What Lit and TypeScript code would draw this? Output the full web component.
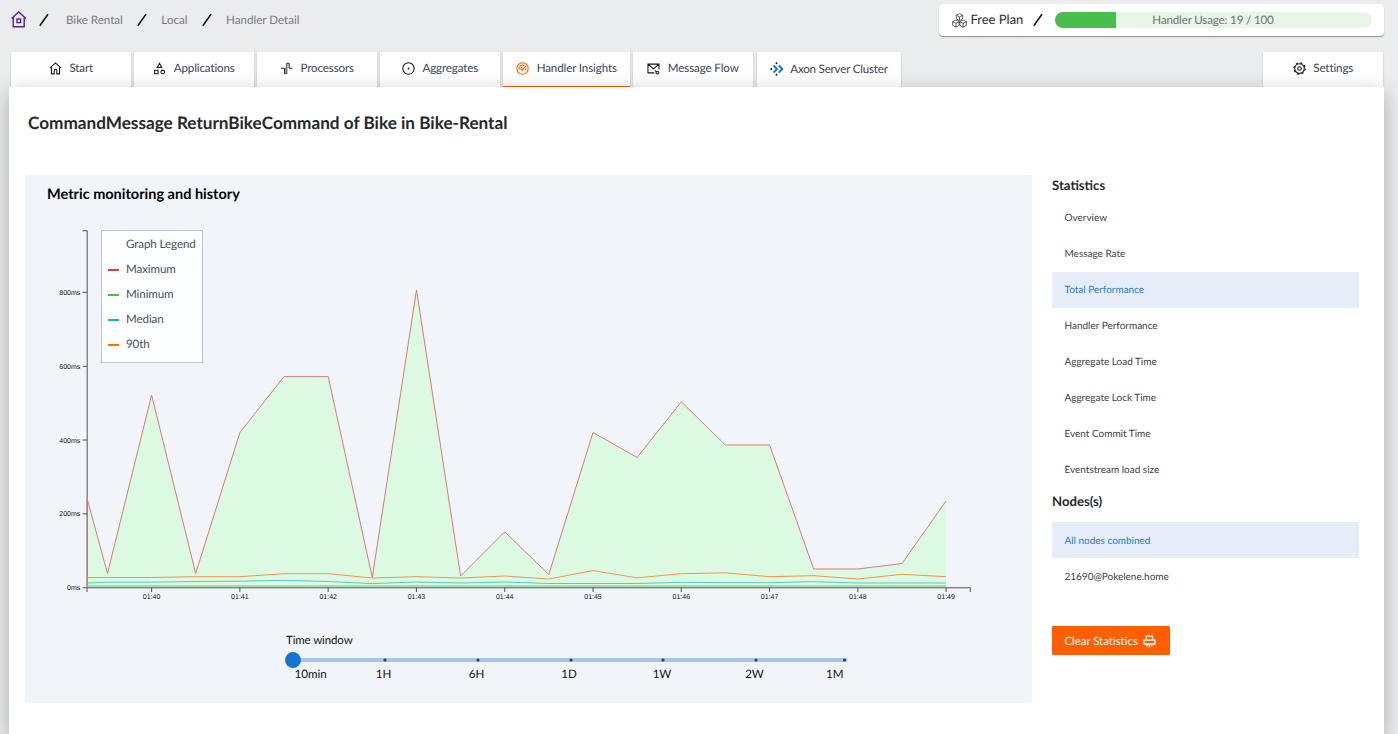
import { LitElement, html, svg, css } from "lit";
import { customElement } from "lit/decorators.js";
import { classMap } from "lit/directives/class-map.js";

const icons: Record<string, unknown> = {
  home: svg`<path d="M1 7.6 8 1.2l7 6.4M3 6.4v8.2h3.4v-4a1.6 1.6 0 0 1 3.2 0v4H13V6.4"/>`,
  apps: svg`<path d="M8 1.6 10.8 6.6H5.2zM2 10.2h4.2v4.2H2z"/><circle cx="12" cy="12.2" r="2.2"/>`,
  processors: svg`<path d="M1 7.6h4.6v6.8h2.8V1.6h2.8v6h4" stroke-width="1.2"/><path d="M7 7v7" stroke="#999" stroke-width="1.6"/>`,
  aggregates: svg`<circle cx="8" cy="8" r="7"/><circle cx="8" cy="8" r="1.1" fill="currentColor" stroke="none"/>`,
  insights: svg`<circle cx="8" cy="8" r="7"/><path d="M3.9 9.4a4.3 4.3 0 0 1 6.2-5M5.8 8.8a2.4 2.4 0 0 1 2.2-2.4M8.4 9 12.4 4.4M12.2 7.8c0 .8-.2 1.6-.6 2.2"/><circle cx="7.8" cy="9.4" r=".8"/>`,
  mail: svg`<path d="M9 13.4H1.2V2.6h13.6v6.6M1.4 2.8 8 8.4l6.6-5.6"/><path d="M9.6 10.4l1.4 1"/><circle cx="12.8" cy="13" r="1.7"/>`,
  gear: svg`<circle cx="8" cy="8" r="5.9"/><circle cx="8" cy="8" r="6.9" stroke-width="1.5" stroke-dasharray="2.7 2.72"/><circle cx="8" cy="8" r="2.2"/>`,
};

const tabs = [
  { id: "start", label: "Start", icon: "home" },
  { id: "applications", label: "Applications", icon: "apps" },
  { id: "processors", label: "Processors", icon: "processors" },
  { id: "aggregates", label: "Aggregates", icon: "aggregates" },
  { id: "insights", label: "Handler Insights", icon: "insights", active: true },
  { id: "flow", label: "Message Flow", icon: "mail" },
  { id: "cluster", label: "Axon Server Cluster", icon: "cluster" },
  { id: "settings", label: "Settings", icon: "gear" },
];

const stats = ["Overview", "Message Rate", "Total Performance", "Handler Performance",
  "Aggregate Load Time", "Aggregate Lock Time", "Event Commit Time", "Eventstream load size"];
const nodes = ["All nodes combined", "21690@Pokelene.home"];

const xs = [87, 107.5, 151.6, 195.7, 239.9, 284, 328.2, 372.3, 416.5, 460.6, 504.7, 548.8,
  593, 637.1, 681.3, 725.4, 769.6, 813.7, 857.9, 902, 946];
const maximum = [498, 573.5, 395, 573.5, 432.5, 376.6, 376.6, 577.5, 290, 576, 531.8, 574.5,
  432.5, 457.5, 401.8, 445, 445, 569, 569, 563.5, 501];
const ninetieth = [577.5, 577.5, 577.5, 576.7, 576.7, 573.7, 573.7, 578, 576.7, 578, 576, 579,
  570.6, 577.8, 573.7, 572.8, 576.7, 575.7, 579, 574.3, 576.7];
const median = [583, 582.2, 582.2, 581.5, 581.2, 580.3, 581.5, 583.6, 582, 583, 582, 583.5,
  583.5, 583.5, 582.3, 582.7, 582.7, 581.7, 583, 583, 583];
const minimum = xs.map(() => 586);
const points = (ys: number[]) => xs.map((x, i) => `${x},${ys[i]}`).join(" ");
const area = (ys: number[]) => `87,587.5 ${points(ys)} 946,587.5`;

@customElement("slash-mark")
class SlashMark extends LitElement {
  static styles = css`:host { display: block; width: 10px; height: 14px; } svg { display: block; }`;
  render() {
    return html`<svg width="10" height="14" viewBox="0 0 10 14"><path d="M.8 12.8 9 1.2" stroke="#111" stroke-width="1.5"/></svg>`;
  }
}

@customElement("axon-tab")
class AxonTab extends LitElement {
  static properties = { label: {}, icon: {}, active: { type: Boolean } };
  declare label: string;
  declare icon: string;
  declare active: boolean;
  static styles = css`
    :host { display: block; }
    .tab { box-sizing: border-box; height: 35px; display: flex; align-items: center; justify-content: center;
      gap: 7.5px; padding-bottom: 2px; background: #fff; border-bottom: 1px solid transparent;
      box-shadow: 0 1px 2px rgba(0,0,0,.2); color: #3a4456; font-size: 11.6px; letter-spacing: -.13px; white-space: nowrap; }
    .tab.active { border-bottom-color: #ee5a0a; }
    .icon { display: block; color: #16181c; fill: none; stroke: currentColor; stroke-width: 1.3; }
    .active .icon { color: #ff5c00; }
    .cluster { padding-bottom: 0; gap: 6px; letter-spacing: -.2px; }
  `;
  render() {
    const cluster = this.icon === "cluster";
    return html`<div class=${classMap({ tab: true, active: !!this.active, cluster })}>
      ${cluster
        ? html`<svg width="14" height="14" viewBox="0 0 14 14"><path d="M3.6 3.4 7 7l-3.4 3.6M8.8 3.4 12.2 7l-3.4 3.6" fill="none" stroke="#1673d8" stroke-width="2"/><g fill="#111"><circle cx="6.5" cy="1.2" r=".95"/><circle cx="1.2" cy="7" r=".95"/><circle cx="6.5" cy="12.8" r=".95"/></g></svg>`
        : html`<svg class="icon" width="13" height="13" viewBox="0 0 16 16">${icons[this.icon]}</svg>`}
      <span>${this.label}</span></div>`;
  }
}

@customElement("metric-chart")
class MetricChart extends LitElement {
  static styles = css`
    :host { display: block; position: relative; height: 404px; }
    .plot { display: block; }
    .axis { fill: none; stroke: #50565d; stroke-width: 1; }
    .label { font: 7px "Liberation Sans", Arial, sans-serif; fill: #111; }
    .end { text-anchor: end; }
    .mid { text-anchor: middle; }
    .area { fill: #dcf9e1; }
    .line { fill: none; stroke-width: 1; }
    .max { stroke: #d97b7b; } .n90 { stroke: #ee9550; } .med { stroke: #50cbc9; }
    .min { stroke: #8ed895; stroke-width: 1.6; }
    .legend { position: absolute; left: 75.5px; top: 13px; width: 102px; height: 133px; box-sizing: border-box;
      border: 1px solid #c2c5cc; background: #fcfdfe; padding: 1px 0 0 6.5px; font-size: 11.6px; letter-spacing: -.1px; color: #4b505b; }
    .item { display: flex; align-items: center; height: 25px; gap: 7px; }
    .swatch { width: 11px; height: 2px; }
    .s-none { background: none; } .s-max { background: #d24545; } .s-min { background: #48bd4c; }
    .s-med { background: #17b8bc; } .s-n90 { background: #ff6a0a; }
  `;
  render() {
    const yTicks = [["800ms", 292], ["600ms", 366], ["400ms", 439.7], ["200ms", 513.6], ["0ms", 587.5]] as const;
    return html`
      <svg class="plot" width="1007" height="404" viewBox="25 217 1007 404">
        <polygon class="area" points=${area(maximum)}></polygon>
        <path class="axis" d="M82.5 230.8H87.2V587.8"/>
        <polyline class="line min" points=${points(minimum)}></polyline>
        <polyline class="line med" points=${points(median)}></polyline>
        <polyline class="line n90" points=${points(ninetieth)}></polyline>
        <polyline class="line max" points=${"87,587 " + points(maximum)}></polyline>
        <path class="axis" d="M87 592V587.8H970.3V592"/>
        ${yTicks.map(([t, y]) => svg`<path class="axis" d="M82.5 ${y + 0.3}H87"/><text class="label end" x="80.3" y=${y + 2.8}>${t}</text>`)}
        ${Array.from({ length: 10 }, (_, i) => {
          const x = 151.6 + i * 88.28;
          return svg`<path class="axis" d="M${x} 587.5V592"/><text class="label mid" x=${x} y="598.8">01:${40 + i}</text>`;
        })}
      </svg>
      <div class="legend">
        ${[["none", "Graph Legend"], ["max", "Maximum"], ["min", "Minimum"], ["med", "Median"], ["n90", "90th"]].map(
          ([k, t]) => html`<div class="item"><span class="swatch s-${k}"></span><span>${t}</span></div>`)}
      </div>`;
  }
}

@customElement("time-slider")
class TimeSlider extends LitElement {
  static styles = css`
    :host { display: block; width: 564px; margin-left: 260px; font-size: 11.6px; color: #111; }
    .title { padding: 12px 0 0 1px; height: 16px; line-height: 16px; font-size: 11.5px; letter-spacing: -.12px; }
    svg { display: block; margin-top: 2px; }
    .labels { position: relative; height: 16px; line-height: 16px; margin-top: -2px; }
    .labels span { position: absolute; transform: translateX(-50%); }
  `;
  render() {
    const labels = [["10min", 25.7], ["1H", 98.5], ["6H", 191.5], ["1D", 284], ["1W", 377], ["2W", 469.5], ["1M", 549.7]] as const;
    return html`
      <div class="title">Time window</div>
      <svg width="564" height="18" viewBox="285 651 564 18">
        <rect x="287" y="658" width="560.5" height="4" rx="1" fill="#a5c6ea"/>
        ${[385, 478, 571, 663, 756, 844.5].map((x) => svg`<circle cx=${x} cy="660" r="1.6" fill="#333c47"/>`)}
        <circle cx="293" cy="660.6" r="8" fill="#0b3c70" opacity=".2"/>
        <circle cx="293" cy="660" r="7.9" fill="#1573d1"/>
      </svg>
      <div class="labels">${labels.map(([t, x]) => html`<span style="left:${x}px">${t}</span>`)}</div>`;
  }
}

@customElement("app-root")
class AppRoot extends LitElement {
  static styles = css`
    :host { display: flex; flex-direction: column; height: 734px; overflow: hidden; background: #ebecee;
      font-family: Lato, "Liberation Sans", sans-serif; text-rendering: geometricPrecision; }
    .header { display: flex; justify-content: space-between; height: 52px; flex: none; padding-right: 14px; }
    .crumbs { display: flex; align-items: center; height: 39px; padding-left: 11px; font-size: 11.6px; color: #77797d; }
    .crumbs span { padding-top: 1px; }
    .crumbs slash-mark { margin: 0 14.5px 0 14px; }
    .crumbs .house + slash-mark { margin: 0 17px 0 12px; }
    .plan { display: flex; align-items: center; width: 445px; height: 32px; margin-top: 4px; box-sizing: border-box;
      padding: 0 12.5px; background: #fff; border-radius: 4px; box-shadow: 0 1px 1px rgba(0,0,0,.4); font-size: 13px; color: #2b2d30; }
    .plan-name { margin: 0 9.5px 0 4px; width: 53px; white-space: nowrap; padding-bottom: 1.5px; }
    .usage { flex: 1; height: 16px; margin-left: 11.5px; border-radius: 8px; text-align: center; line-height: 17px; font-size: 11.6px;
      letter-spacing: -.16px; color: #68756b; background: linear-gradient(90deg, #48bf4c 61px, #e8f6ea 61px); }
    .tabs { display: grid; grid-template-columns: 120px 120px 120px 120px 127px 120px 144px 120px; column-gap: 3px;
      padding-left: 11px; height: 35px; flex: none; }
    .t-cluster { margin: 0 -1px 0 1px; }
    .t-settings { margin-left: 360px; margin-right: -360px; }
    .page { position: relative; flex: 1; margin: 0 14px 0 9px; padding: 0 25px 0 16px; background: #fff;
      box-shadow: 0 6px 20px rgba(0,0,0,.28); box-sizing: border-box; }
    .title { margin: 0; padding: 24px 0 0 3px; height: 64px; line-height: 24px; font-size: 17.17px; font-weight: 700; color: #26282a; }
    .columns { display: flex; gap: 20px; }
    .card { width: 1007px; height: 528px; flex: none; background: #f1f5fa; border-radius: 2px; }
    .card-title { margin: 0; height: 42px; padding-left: 22px; line-height: 39px; font-size: 14.5px; font-weight: 700; color: #000; }
    .side { flex: 1; }
    .side h3 { margin: 0; font-size: 13.15px; line-height: 20px; font-weight: 700; color: #26282a; }
    .side h3.first { margin-bottom: 15px; height: 10px; }
    .side h3.nodes-title { height: 34px; padding-top: 3px; box-sizing: border-box; }
    .row { height: 36px; line-height: 38px; padding-left: 12.5px; font-size: 10px; letter-spacing: -.01px; color: #3c3f43; }
    .stat-list .row { line-height: 36px; }
    .row.on { background: #e5edf8; color: #2b7cd0; }
    .clear { display: flex; align-items: center; gap: 5px; width: 118px; height: 29px; margin-top: 32px; padding: 1px 0 0 12.5px;
      border: 0; border-radius: 1px; background: #ff5f00; color: #fff; font: 11.35px Lato, sans-serif; text-rendering: geometricPrecision;
      box-sizing: border-box; white-space: nowrap; }
  `;
  render() {
    const rows = (list: string[], selected: string) =>
      list.map((t) => html`<div class=${classMap({ row: true, on: t === selected })}>${t}</div>`);
    return html`
      <header class="header">
        <nav class="crumbs">
          <svg class="house" width="16" height="17" viewBox="0 0 16 17" fill="none" stroke="#5a1f96" stroke-width="1.4"><path d="M.6 7.6 7.7 1l7.2 6.6M2.2 6.6v9.2h11V6.6"/><rect x="6" y="8" width="3.6" height="3.6"/></svg>
          <slash-mark></slash-mark><span>Bike Rental</span>
          <slash-mark></slash-mark><span>Local</span>
          <slash-mark></slash-mark><span>Handler Detail</span>
        </nav>
        <div class="plan">
          <svg width="15" height="15" viewBox="0 0 15 15" fill="none" stroke="#33363a" stroke-width=".8"><path d="M7.5.6 10.7 2.3v3.6L7.5 7.6 4.3 5.9V2.3zM4.3 2.3l3.2 1.6 3.2-1.6M7.5 3.9v3.7M3.9 7l3.3 1.7v3.6l-3.3 1.9-3.3-1.9V8.7zM.6 8.7l3.3 1.6 3.3-1.6M3.9 10.3v3.9M11.1 7l3.3 1.7v3.6l-3.3 1.9-3.3-1.9V8.7zM7.8 8.7l3.3 1.6 3.3-1.6M11.1 10.3v3.9"/></svg>
          <span class="plan-name">Free Plan</span><slash-mark></slash-mark>
          <div class="usage">Handler Usage: 19 / 100</div>
        </div>
      </header>
      <nav class="tabs">
        ${tabs.map((t) => html`<axon-tab class="t-${t.id}" .label=${t.label} .icon=${t.icon} .active=${!!t.active}></axon-tab>`)}
      </nav>
      <main class="page">
        <h1 class="title">CommandMessage ReturnBikeCommand of Bike in Bike-Rental</h1>
        <div class="columns">
          <section class="card">
            <h2 class="card-title">Metric monitoring and history</h2>
            <metric-chart></metric-chart>
            <time-slider></time-slider>
          </section>
          <aside class="side">
            <h3 class="first">Statistics</h3>
            <div class="stat-list">${rows(stats, "Total Performance")}</div>
            <h3 class="nodes-title">Nodes(s)</h3>
            ${rows(nodes, "All nodes combined")}
            <button class="clear">Clear Statistics
              <svg width="13" height="13" viewBox="0 0 13 13" fill="none" stroke="#fff" stroke-width="1.3"><path d="M3.3 5V1.2h6.2V5M1 9V5.2h11V9H1zM4 9v2.4M6.4 9v3.6M8.8 9v2.4"/></svg>
            </button>
          </aside>
        </div>
      </main>`;
  }
}
